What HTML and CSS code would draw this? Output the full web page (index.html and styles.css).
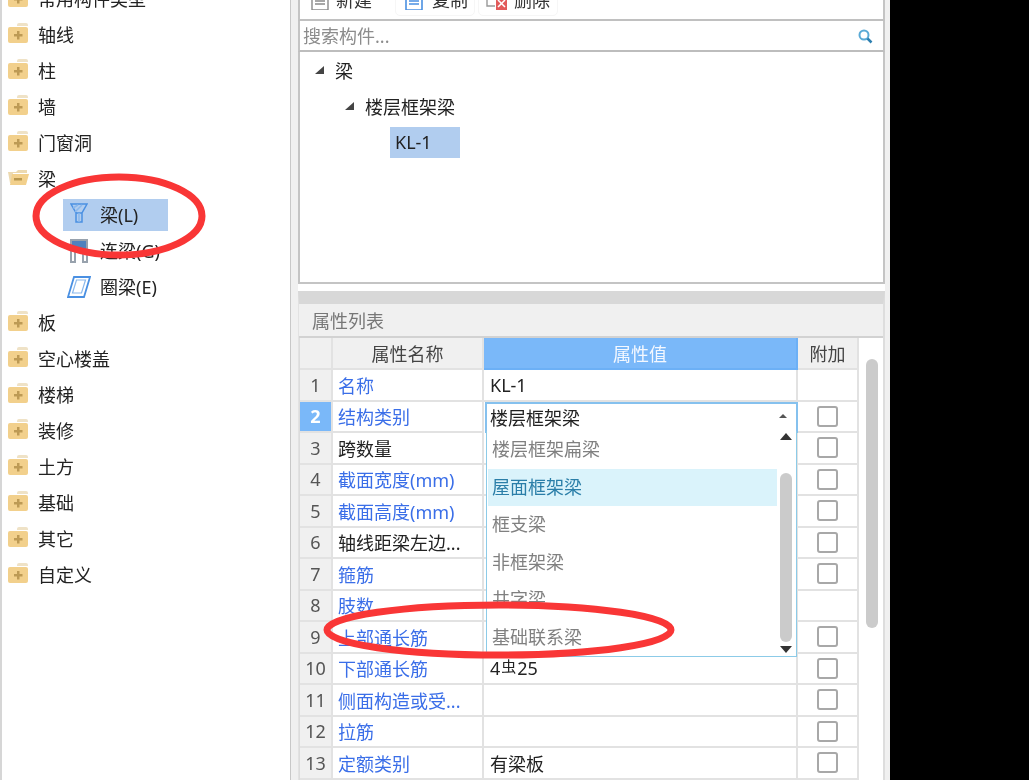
FILE: index.html
```html
<!DOCTYPE html>
<html lang="zh-CN">
<head>
  <meta charset="UTF-8" />
  <title>构件列表</title>
  <link rel="stylesheet" href="styles.css">
</head>
<body>
  <div class="screen">
    <div class="left-panel">
      <div class="type-tree">
        <div class="type-row"><svg class="folder" viewBox="0 0 22 20"><use href="#folder-closed"/></svg>常用构件类型</div>
        <div class="type-row"><svg class="folder" viewBox="0 0 22 20"><use href="#folder-closed"/></svg>轴线</div>
        <div class="type-row"><svg class="folder" viewBox="0 0 22 20"><use href="#folder-closed"/></svg>柱</div>
        <div class="type-row"><svg class="folder" viewBox="0 0 22 20"><use href="#folder-closed"/></svg>墙</div>
        <div class="type-row"><svg class="folder" viewBox="0 0 22 20"><use href="#folder-closed"/></svg>门窗洞</div>
        <div class="type-row"><svg class="folder" viewBox="0 0 22 20"><path d="M1 5h8l2-2h9v3H6L4 16H3z" fill="#ecd9b0"/><path d="M5 7h17l-3 11H3z" fill="#f2d08c"/><rect x="7" y="11" width="8" height="2.500" fill="#b8974f"/></svg>梁</div>
        <div class="sub-row">
          <div class="sub-item active">
            <svg class="sub-icon raised" viewBox="0 0 18 20" fill="none" stroke="#4a90e2" stroke-width="1.500"><path d="M1 1h16l-5 9v9H6v-9z"/><path d="M6 10h6" /><path d="M3 5l5-3M5 9l7-7M9 10v9" stroke="#8ab8ec"/></svg>
            <span>梁(L)</span>
          </div>
        </div>
        <div class="sub-row">
          <div class="sub-item">
            <svg class="sub-icon" viewBox="0 0 18 24"><rect x="1" y="1" width="16" height="10" fill="#4f81bd"/><path d="M1 1h16v22h-4V11H5v12H1z" fill="none" stroke="#98a2ad" stroke-width="2"/></svg>
            <span>连梁(G)</span>
          </div>
        </div>
        <div class="sub-row">
          <div class="sub-item">
            <svg class="sub-icon wide" viewBox="0 0 24 22" fill="none" stroke="#4a90e2" stroke-width="1.800"><path d="M7 1h16l-6 20H1z"/><path d="M9.500 4h9l-4 13H5.500z" stroke="#8ab8ec" stroke-width="1.200"/></svg>
            <span>圈梁(E)</span>
          </div>
        </div>
        <div class="type-row"><svg class="folder" viewBox="0 0 22 20"><use href="#folder-closed"/></svg>板</div>
        <div class="type-row"><svg class="folder" viewBox="0 0 22 20"><use href="#folder-closed"/></svg>空心楼盖</div>
        <div class="type-row"><svg class="folder" viewBox="0 0 22 20"><use href="#folder-closed"/></svg>楼梯</div>
        <div class="type-row"><svg class="folder" viewBox="0 0 22 20"><use href="#folder-closed"/></svg>装修</div>
        <div class="type-row"><svg class="folder" viewBox="0 0 22 20"><use href="#folder-closed"/></svg>土方</div>
        <div class="type-row"><svg class="folder" viewBox="0 0 22 20"><use href="#folder-closed"/></svg>基础</div>
        <div class="type-row"><svg class="folder" viewBox="0 0 22 20"><use href="#folder-closed"/></svg>其它</div>
        <div class="type-row"><svg class="folder" viewBox="0 0 22 20"><use href="#folder-closed"/></svg>自定义</div>
      </div>
    </div>

    <div class="right-panel">
      <div class="toolbar">
        <div class="tool first"><svg class="tool-icon" viewBox="0 0 18 18" fill="none" stroke="#8a8a8a" stroke-width="1.400"><path d="M1 -2h16v20H1zM4 6h10M4 9h10M4 12h10"/></svg>新建<span class="tool-arrow"></span></div>
        <div class="tool"><svg class="tool-icon" viewBox="0 0 18 18" fill="none" stroke="#4a90e2" stroke-width="1.600"><path d="M1 -2h16v20H1zM4 6h10M4 9h10M4 12h10"/></svg>复制</div>
        <div class="tool"><svg class="tool-icon del" viewBox="0 0 21 18"><path d="M1 -2v16h8" fill="none" stroke="#999" stroke-width="1.400"/><rect x="10" y="4" width="11" height="14" fill="#e25b5b"/><path d="M12 8l7 7M19 8l-7 7" stroke="#fff" stroke-width="1.500"/></svg>删除</div>
      </div>
      <div class="search-bar">
        <span class="search-hint">搜索构件...</span>
        <svg class="search-icon" viewBox="0 0 16 16" fill="none"><circle cx="7" cy="7" r="4.500" stroke="#5aaad6" stroke-width="2"/><path d="M10.500 10.500l4 4" stroke="#2d7fb0" stroke-width="2.500"/></svg>
      </div>
      <div class="member-tree">
        <div class="member-row"><span class="caret"></span>梁</div>
        <div class="member-row level-2"><span class="caret"></span>楼层框架梁</div>
        <div class="member-row level-3"><span class="member-leaf">KL-1</span></div>
      </div>

      <div class="divider"></div>
      <div class="prop-panel">
        <div class="prop-title">属性列表</div>
        <div class="prop-body">
          <div class="prop-table">
            <div class="cell head"></div>
            <div class="cell head">属性名称</div>
            <div class="cell head value-head">属性值</div>
            <div class="cell head">附加</div>

            <div class="cell num">1</div><div class="cell name link">名称</div><div class="cell value">KL-1</div><div class="cell check"></div>
            <div class="cell num selected">2</div><div class="cell name link">结构类别</div><div class="cell value editing">楼层框架梁<span class="up-arrow"></span></div><div class="cell check"><span class="box"></span></div>
            <div class="cell num">3</div><div class="cell name">跨数量</div><div class="cell value"></div><div class="cell check"><span class="box"></span></div>
            <div class="cell num">4</div><div class="cell name link">截面宽度(mm)</div><div class="cell value"></div><div class="cell check"><span class="box"></span></div>
            <div class="cell num">5</div><div class="cell name link">截面高度(mm)</div><div class="cell value"></div><div class="cell check"><span class="box"></span></div>
            <div class="cell num">6</div><div class="cell name">轴线距梁左边...</div><div class="cell value"></div><div class="cell check"><span class="box"></span></div>
            <div class="cell num">7</div><div class="cell name link">箍筋</div><div class="cell value"></div><div class="cell check"><span class="box"></span></div>
            <div class="cell num">8</div><div class="cell name link">肢数</div><div class="cell value"></div><div class="cell check"></div>
            <div class="cell num">9</div><div class="cell name link">上部通长筋</div><div class="cell value"></div><div class="cell check"><span class="box"></span></div>
            <div class="cell num">10</div><div class="cell name link">下部通长筋</div><div class="cell value">4<span class="rebar">虫</span>25</div><div class="cell check"><span class="box"></span></div>
            <div class="cell num">11</div><div class="cell name link">侧面构造或受...</div><div class="cell value"></div><div class="cell check"><span class="box"></span></div>
            <div class="cell num">12</div><div class="cell name link">拉筋</div><div class="cell value"></div><div class="cell check"><span class="box"></span></div>
            <div class="cell num">13</div><div class="cell name link">定额类别</div><div class="cell value">有梁板</div><div class="cell check"><span class="box"></span></div>
          </div>
          <div class="prop-scroll"><div class="prop-thumb"></div></div>
        </div>
      </div>

      <div class="dropdown">
        <div class="drop-list">
          <div class="drop-item">楼层框架扁梁</div>
          <div class="drop-item hover">屋面框架梁</div>
          <div class="drop-item">框支梁</div>
          <div class="drop-item">非框架梁</div>
          <div class="drop-item">井字梁</div>
          <div class="drop-item">基础联系梁</div>
        </div>
        <div class="drop-scroll">
          <span class="scroll-up"></span>
          <div class="drop-thumb"></div>
          <span class="scroll-down"></span>
        </div>
      </div>
    </div>

    <div class="black-bar"></div>

    <svg class="marks" viewBox="0 0 1029 780">
      <ellipse cx="119" cy="216" rx="83" ry="39" />
      <ellipse cx="499" cy="630" rx="172" ry="25" />
    </svg>
  </div>

  <svg class="defs" width="0" height="0">
    <defs>
      <g id="folder-closed">
        <path d="M10 3V2q0-2 2-2h7q2 0 2 2v1z" fill="#efe2c6"/>
        <path d="M1 6q0-2 2-2h16q2 0 2 2v12q0 2-2 2H3q-2 0-2-2z" fill="#f2d08c"/>
        <path d="M10 8h2.500v3h3v2.500h-3v3H10v-3H7V11h3z" fill="#bd9a55"/>
      </g>
    </defs>
  </svg>
</body>
</html>
```

FILE: styles.css
```css
* {
  margin: 0;
  padding: 0;
  box-sizing: border-box;
}
html, body {
  width: 1029px;
  height: 780px;
  overflow: hidden;
}
body {
  font-family: "Noto Sans", "Noto Sans CJK SC", sans-serif;
  font-size: 18px;
  color: #222;
  background-color: #000;
}
.defs {
  display: none;
}
.screen {
  position: relative;
  display: flex;
  width: 1029px;
  height: 780px;
  overflow: hidden;
  filter: blur(0.45px);
}

/* left type tree */
.left-panel {
  width: 298px;
  height: 780px;
  flex-shrink: 0;
  background-color: #fff;
  border-left: 2px solid #d6d6d6;
  border-right: 7px solid #f0f0f0;
  overflow: hidden;
  box-shadow: inset -1px 0 0 #c8c8c8;
}
.type-tree {
  margin-top: -19px;
}
.type-row {
  display: flex;
  align-items: center;
  height: 36px;
  padding-left: 5px;
  gap: 9px;
  line-height: 34px;
  padding-bottom: 1px;
  white-space: nowrap;
}
.folder {
  width: 22px;
  height: 20px;
  margin-top: -3px;
  flex-shrink: 0;
}
.sub-row {
  display: flex;
  align-items: center;
  height: 36px;
  padding-left: 61px;
}
.sub-item {
  display: flex;
  align-items: center;
  width: 105px;
  height: 32px;
  padding-left: 7px;
}
.sub-item span {
  margin-left: 12px;
  margin-top: -2px;
}
.sub-item.active {
  background-color: #b1cdef;
}
.sub-icon {
  width: 18px;
  height: 24px;
  flex-shrink: 0;
}
.sub-icon.raised {
  height: 20px;
  margin-top: -4px;
}
.sub-icon.wide {
  width: 24px;
  height: 22px;
  margin: 0 -3px;
}

/* right panel */
.right-panel {
  position: relative;
  width: 592px;
  height: 780px;
  flex-shrink: 0;
  background-color: #fff;
  border-right: 5px solid #f0f0f0;
}
.toolbar {
  display: flex;
  align-items: center;
  height: 21px;
  padding: 0 3px;
  gap: 3px;
  border-left: 2px solid #c4c4c4;
  border-right: 2px solid #c4c4c4;
  border-bottom: 2px solid #c0c0c0;
  overflow: hidden;
}
.tool {
  display: flex;
  align-items: center;
  height: 34px;
  margin-top: -22px;
  padding-left: 9px;
  gap: 9px;
  width: 80px;
  color: #333;
  white-space: nowrap;
  border: 1px solid #f6f6f6;
  border-radius: 5px;
}
.tool.first {
  width: 89px;
  padding-left: 7px;
  gap: 7px;
  border-color: transparent;
}
.tool-icon {
  width: 18px;
  height: 18px;
  margin-top: 5px;
  flex-shrink: 0;
}
.tool-icon.del {
  width: 21px;
  margin-left: -2px;
  margin-right: -2px;
}
.tool-arrow {
  width: 0;
  height: 0;
  margin-left: 2px;
  border-left: 3px solid transparent;
  border-right: 3px solid transparent;
  border-top: 3px solid #555;
}
.search-bar {
  display: flex;
  align-items: center;
  justify-content: space-between;
  height: 31px;
  padding: 0 10px 0 3px;
  border-left: 2px solid #c4c4c4;
  border-right: 2px solid #c4c4c4;
  border-bottom: 2px solid #bdbdbd;
}
.search-hint {
  color: #8c8c8c;
  margin-top: -2px;
}
.search-icon {
  width: 16px;
  height: 16px;
}
.member-tree {
  height: 232px;
  border-left: 2px solid #c4c4c4;
  border-right: 2px solid #c4c4c4;
  border-bottom: 2px solid #c4c4c4;
}
.member-row {
  display: flex;
  align-items: center;
  height: 36px;
  padding-left: 15px;
}
.level-2 {
  padding-left: 45px;
}
.level-3 {
  padding-left: 90px;
}
.caret {
  width: 0;
  height: 0;
  margin-right: 11px;
  border-left: 9px solid transparent;
  border-bottom: 8px solid #444;
}
.member-leaf {
  display: flex;
  align-items: center;
  width: 70px;
  height: 31px;
  margin-top: 1px;
  padding: 0 0 2px 5px;
  background-color: #b1cdef;
}
.divider {
  height: 7px;
}
.prop-panel {
  border-top: 13px solid #d8d8d8;
  border-left: 1px solid #e2e2e2;
  border-right: 2px solid #dddddd;
}
.prop-title {
  display: flex;
  align-items: center;
  height: 34px;
  padding-left: 13px;
  color: #777;
  background-color: #f0f0f0;
  border-bottom: 2px solid #d2d2d2;
}
.prop-body {
  display: flex;
}
.prop-table {
  display: grid;
  grid-template-columns: 33px 151px 314px 61px;
  grid-template-rows: 32px repeat(13, 31.5px);
  width: 560px;
  flex-shrink: 0;
  border-left: 1px solid #dcdcdc;
}
.cell {
  display: flex;
  align-items: center;
  border-right: 2px solid #e2e2e2;
  border-bottom: 2px solid #e2e2e2;
  white-space: nowrap;
}
.head {
  justify-content: center;
  color: #444;
  background-color: #f0f0f0;
}
.value-head {
  color: #f4f8ff;
  background-color: #7ab8f9;
  border-color: #6cb0f6;
}
.num {
  justify-content: center;
  color: #555;
  background-color: #f0f0f0;
}
.num.selected {
  color: #fff;
  font-weight: 700;
  background-color: #7ab8f9;
}
.name {
  padding-left: 5px;
}
.link {
  color: #3a6ee8;
}
.value {
  padding-left: 6px;
}
.editing {
  position: relative;
  padding-left: 3px;
  margin-left: 1px;
  border: 2px solid #85c1ee;
}
.up-arrow {
  position: absolute;
  right: 9px;
  top: 10px;
  width: 0;
  height: 0;
  border-left: 4px solid transparent;
  border-right: 4px solid transparent;
  border-bottom: 4px solid #555;
}
.rebar {
  position: relative;
  top: -3px;
  font-size: 15px;
  margin: 0 1px;
}
.check {
  justify-content: center;
}
.box {
  width: 21px;
  height: 21px;
  border: 2px solid #a8a8a8;
  border-radius: 3px;
}
.prop-scroll {
  width: 22px;
  padding-left: 7px;
}
.prop-thumb {
  width: 12px;
  height: 269px;
  margin-top: 21px;
  background-color: #cbcbcb;
  border-radius: 6px;
}

/* combo list over the table */
.dropdown {
  position: absolute;
  left: 188px;
  top: 431px;
  display: flex;
  width: 311px;
  height: 226px;
  background-color: #fff;
  border: 1px solid #8ccbe8;
  border-top: none;
}
.drop-list {
  width: 290px;
  padding-left: 1px;
}
.drop-item {
  display: flex;
  align-items: center;
  height: 37.5px;
  padding: 0 0 3px 4px;
  color: #808080;
}
.drop-item.hover {
  color: #2a7ea8;
  background-color: #daf3fb;
}
.drop-scroll {
  position: relative;
  flex: 1;
}
.drop-thumb {
  position: absolute;
  left: 3px;
  top: 42px;
  width: 12px;
  height: 169px;
  background-color: #cbcbcb;
  border-radius: 6px;
}
.scroll-up,
.scroll-down {
  position: absolute;
  left: 3px;
  width: 0;
  height: 0;
  border-left: 6px solid transparent;
  border-right: 6px solid transparent;
}
.scroll-up {
  top: 2px;
  border-bottom: 7px solid #333;
}
.scroll-down {
  bottom: 3px;
  border-top: 7px solid #333;
}

.black-bar {
  flex: 1;
  background-color: #000;
}

/* hand drawn red marks */
.marks {
  position: absolute;
  left: 0;
  top: 0;
  width: 1029px;
  height: 780px;
  pointer-events: none;
}
.marks ellipse {
  fill: none;
  stroke: #f93636;
  stroke-width: 7;
}
```
